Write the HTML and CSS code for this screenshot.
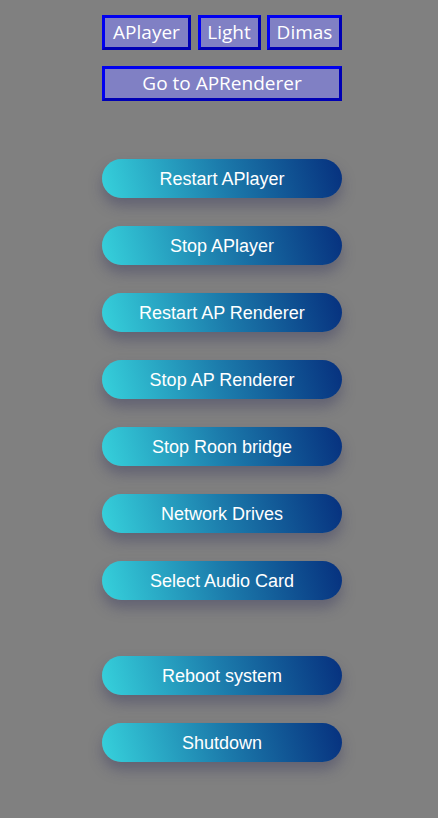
FILE: index.html
```html
<!DOCTYPE html>
<html>
<head>
<meta charset="utf-8">
<link rel="stylesheet" href="styles.css">
</head>
<body>
<div class="panel">
  <div class="nav-row">
    <button class="nav-btn nav-aplayer">APlayer</button>
    <button class="nav-btn nav-light">Light</button>
    <button class="nav-btn nav-dimas">Dimas</button>
  </div>
  <button class="nav-btn nav-wide">Go to APRenderer</button>

  <div class="actions">
    <button class="act">Restart APlayer</button>
    <button class="act">Stop APlayer</button>
    <button class="act">Restart AP Renderer</button>
    <button class="act">Stop AP Renderer</button>
    <button class="act">Stop Roon bridge</button>
    <button class="act">Network Drives</button>
    <button class="act">Select Audio Card</button>
  </div>
  <div class="actions system">
    <button class="act">Reboot system</button>
    <button class="act">Shutdown</button>
  </div>
</div>
</body>
</html>
```
FILE: styles.css
```css
html, body {
  margin: 0;
  padding: 0;
  background: #808080;
}
body {
  padding: 15px 0 60px 6px;
}
.panel {
  width: 240px;
  margin: 0 auto;
  display: flex;
  flex-direction: column;
}
.nav-row {
  display: flex;
  justify-content: space-between;
  height: 35px;
}
.nav-btn {
  box-sizing: border-box;
  height: 35px;
  margin: 0;
  padding: 0;
  background: #8080c4;
  color: #ffffff;
  font-family: "Open Sans", "Noto Sans", sans-serif;
  font-size: 19px;
  border: 3px solid #0000e0;
  border-color: #0000f0 #0000b4 #0000b4 #0000f0;
  line-height: 29px;
  text-align: center;
}
.nav-aplayer { width: 89px; }
.nav-light { width: 63px; }
.nav-dimas { width: 75px; }
.nav-wide {
  width: 240px;
  margin-top: 16px;
}
.actions {
  display: flex;
  flex-direction: column;
  gap: 28px;
  margin-top: 58px;
}
.actions.system {
  margin-top: 56px;
}
.act {
  box-sizing: border-box;
  width: 240px;
  height: 39px;
  margin: 0;
  padding: 2px 0 0;
  border: none;
  border-radius: 20px;
  background: linear-gradient(75deg, #36d2dc 0%, #1c7cac 50%, #06307e 100%);
  color: #ffffff;
  font-family: "Liberation Sans", Arial, sans-serif;
  font-size: 18px;
  box-shadow: 0 8px 14px rgba(40, 40, 90, 0.35);
}
```
